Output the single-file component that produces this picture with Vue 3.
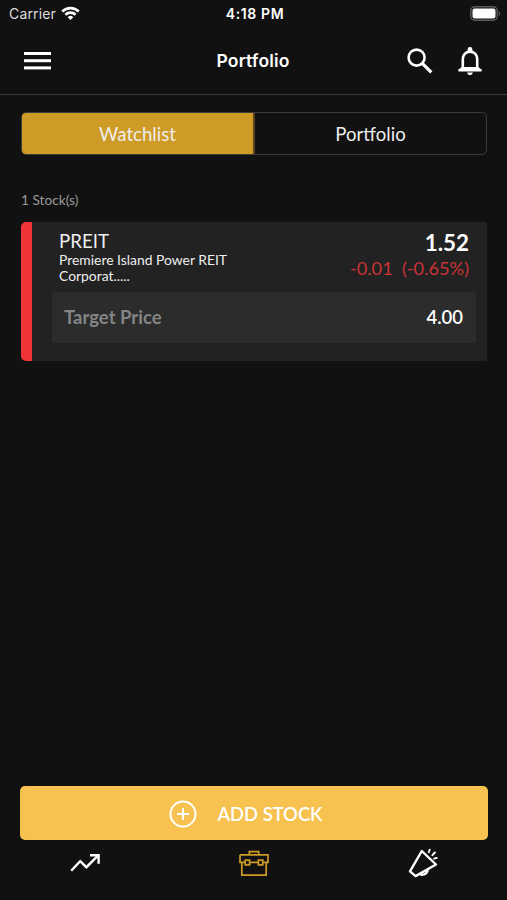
<template>
  <div class="screen">
    <div class="status-bar">
      <div class="carrier">
        <span>Carrier</span>
        <svg width="19" height="15" viewBox="0 0 19 15" fill="none" stroke="#fff" stroke-width="2.6">
          <path d="M1.2 5.5a11.8 11.8 0 0 1 16.6 0" />
          <path d="M4.4 8.7a7.3 7.3 0 0 1 10.2 0" />
          <path d="M6.7 11.2a4 4 0 0 1 5.6 0L9.5 14z" fill="#fff" stroke="none" />
        </svg>
      </div>
      <span class="clock">4:18 PM</span>
      <svg class="battery" width="31" height="15" viewBox="0 0 31 15">
        <rect x="0.8" y="0.8" width="26.4" height="13.4" rx="4" fill="none" stroke="#5c5c5c" stroke-width="1.4" />
        <rect x="2.5" y="2.5" width="23" height="10" rx="2.2" fill="#fff" />
        <path d="M28.7 5.2c2 .7 2 3.9 0 4.6z" fill="#5c5c5c" />
      </svg>
    </div>

    <header class="header">
      <svg class="menu" width="27" height="18" viewBox="0 0 27 18" fill="#fff">
        <rect y="0" width="27" height="3" />
        <rect y="7.2" width="27" height="3" />
        <rect y="14.4" width="27" height="3" />
      </svg>
      <h1 class="title">Portfolio</h1>
      <div class="actions">
        <svg width="26" height="26" viewBox="0 0 26 26" fill="none" stroke="#fff">
          <circle cx="9.6" cy="9.6" r="8" stroke-width="2.6" />
          <path d="M15.3 15.3l9 9" stroke-width="3.3" />
        </svg>
        <svg width="24" height="28" viewBox="0 0 24 28">
          <path d="M4.8 22v-9.5C4.8 8 7.5 4.6 12 4.6s7.2 3.4 7.2 7.9V22M.4 23.3h23.2" fill="none" stroke="#fff" stroke-width="2.6" />
          <path d="M9.6 5V2.2a2.4 2.2 0 0 1 4.8 0V5zM3.5 20L.6 22.8h22.8L20.5 20zM9.2 25.6h5.6a2.8 2.5 0 0 1-5.6 0z" fill="#fff" />
        </svg>
      </div>
    </header>

    <main class="content">
      <div class="tabs">
        <button
          v-for="tab in tabs"
          :key="tab"
          class="tab"
          :class="{ active: tab === activeTab }"
          @click="activeTab = tab"
        >{{ tab }}</button>
      </div>

      <p class="count">{{ stocks.length }} Stock(s)</p>

      <div v-for="stock in stocks" :key="stock.code" class="stock-card">
        <div class="stock-top">
          <div class="stock-info">
            <span class="stock-code">{{ stock.code }}</span>
            <span class="stock-name">{{ stock.name }}</span>
          </div>
          <div class="stock-data">
            <span class="stock-price">{{ fmt(stock.price) }}</span>
            <span class="stock-change">{{ fmt(stock.change) }}&nbsp; ({{ fmt(stock.percent) }}%)</span>
          </div>
        </div>
        <div class="target">
          <span class="target-label">Target Price</span>
          <span class="target-value">{{ fmt(stock.target) }}</span>
        </div>
      </div>
    </main>

    <button class="add-btn">
      <svg width="28" height="28" viewBox="0 0 28 28" fill="none" stroke="#fff" stroke-width="2">
        <circle cx="14" cy="14" r="12.5" />
        <path d="M14 8v12M8 14h12" />
      </svg>
      <span>ADD STOCK</span>
    </button>

    <nav class="nav">
      <a class="nav-item">
        <svg width="30" height="20" viewBox="0 0 30 20" fill="none" stroke="#fff" stroke-width="2.4">
          <path d="M1.2 17.8l9-9.6 6.2 6L28 2.6" />
          <path d="M20 2.2h8.6v8.6" />
        </svg>
      </a>
      <a class="nav-item">
        <svg width="30" height="27" viewBox="0 0 30 27" fill="none" stroke="#cf9b27" stroke-width="1.7">
          <path d="M10.3 4.6V1.6h9.4v3" />
          <path d="M1 4.8h28v7.6h-4.8M19.4 12.4h-8.8M5.8 12.4H1V4.8" />
          <path d="M2.8 12.4v12.7h24.4V12.4" />
          <rect x="6.2" y="10.1" width="4.4" height="4.8" />
          <rect x="19.4" y="10.1" width="4.4" height="4.8" />
        </svg>
      </a>
      <a class="nav-item">
        <svg width="30" height="30" viewBox="0 0 30 30" fill="none" stroke="#fff" stroke-width="2.4" stroke-linejoin="round">
          <path d="M13.8 3L2 23.3l5.6 4.8L28 16.5z" />
          <path d="M12.2 25.6c1.2 2.2 6.8 1.4 7.5-3.8" />
          <path d="M20.8 4.2l.9-2.5M24.4 7.2l2.5-2.7M26.2 10.7l2.6-.8" stroke-linecap="round" stroke-width="1.9" />
        </svg>
      </a>
    </nav>
  </div>
</template>

<script setup>
import { ref } from 'vue'

const tabs = ['Watchlist', 'Portfolio']
const activeTab = ref('Watchlist')

const stocks = ref([
  {
    code: 'PREIT',
    name: 'Premiere Island Power REIT Corporat.....',
    price: 1.52,
    change: -0.01,
    percent: -0.65,
    target: 4
  }
])

function fmt(v) {
  return v.toFixed(2)
}
</script>

<style>
body {
  background: #111;
}
</style>

<style scoped>
.screen {
  display: flex;
  flex-direction: column;
  height: 900px;
  background: #111;
  color: #fff;
  font-family: Lato, sans-serif;
  overflow: hidden;
}

button {
  margin: 0;
  padding: 0;
  border: none;
  background: none;
  color: inherit;
  font: inherit;
}

svg {
  display: block;
  flex-shrink: 0;
}

.status-bar {
  display: grid;
  grid-template-columns: 1fr auto 1fr;
  align-items: center;
  height: 26px;
  padding: 0 6px 0 9px;
  font-family: Inter, sans-serif;
  font-size: 14px;
}

.carrier {
  display: flex;
  align-items: center;
  gap: 5px;
  letter-spacing: 0.15px;
  color: #ddd;
}

.clock {
  font-weight: 600;
  letter-spacing: 0.6px;
}

.battery {
  justify-self: end;
}

.header {
  display: grid;
  grid-template-columns: 1fr auto 1fr;
  align-items: center;
  height: 67px;
  padding: 1px 25px 0 24px;
  border-bottom: 1px solid #3a3a3a;
}

.title {
  margin: 0;
  font-family: Inter, sans-serif;
  font-size: 17.5px;
  font-weight: 600;
  letter-spacing: 0.15px;
}

.actions {
  display: flex;
  align-items: center;
  justify-content: flex-end;
  gap: 25px;
}

.content {
  flex: 1;
  padding: 17px 20px 0 21px;
}

.tabs {
  display: flex;
  height: 43px;
  box-sizing: border-box;
  border: 1px solid #3c3c3c;
  border-radius: 5px;
  overflow: hidden;
}

.tab {
  flex: 1;
  font-size: 18.6px;
  color: #eee;
}

.tab.active {
  background: #cf9b27;
  border-right: 2px solid #5c4520;
}

.count {
  margin: 35px 0 12px;
  font-size: 13.7px;
  line-height: 20px;
  color: #999;
}

.stock-card {
  height: 139px;
  box-sizing: border-box;
  padding: 8px 11px 0 20px;
  border-left: 11px solid #ee3436;
  border-radius: 5px 0 0 5px;
  background: #222;
}

.stock-top {
  display: flex;
  justify-content: space-between;
  height: 62px;
  padding: 0 7px;
}

.stock-info,
.stock-data {
  display: flex;
  flex-direction: column;
}

.stock-info {
  width: 190px;
}

.stock-code {
  font-size: 18.7px;
  line-height: 22px;
  color: #eee;
}

.stock-name {
  font-size: 13.9px;
  line-height: 16px;
  color: #eee;
}

.stock-data {
  align-items: flex-end;
}

.stock-price {
  font-size: 22.4px;
  font-weight: 700;
  line-height: 26px;
}

.stock-change {
  font-size: 18.2px;
  line-height: 24px;
  color: #c93437;
}

.target {
  display: flex;
  align-items: center;
  justify-content: space-between;
  height: 51px;
  box-sizing: border-box;
  padding: 0 13px 1px 12px;
  border-radius: 3px;
  background: #2c2c2c;
  font-size: 18.5px;
  font-weight: 700;
}

.target-label {
  color: #858585;
}

.target-value {
  font-weight: 600;
}

.add-btn {
  display: flex;
  align-items: center;
  justify-content: center;
  gap: 20px;
  height: 54px;
  flex-shrink: 0;
  margin: 0 19px 0 20px;
  padding: 1px 16px 0 0;
  border-radius: 5px;
  background: #f7c250;
  font-size: 18.4px;
  font-weight: 600;
}

.nav {
  display: flex;
  height: 60px;
  flex-shrink: 0;
}

.nav-item {
  display: flex;
  flex: 1;
  align-items: center;
  justify-content: center;
  height: 46px;
}
</style>
